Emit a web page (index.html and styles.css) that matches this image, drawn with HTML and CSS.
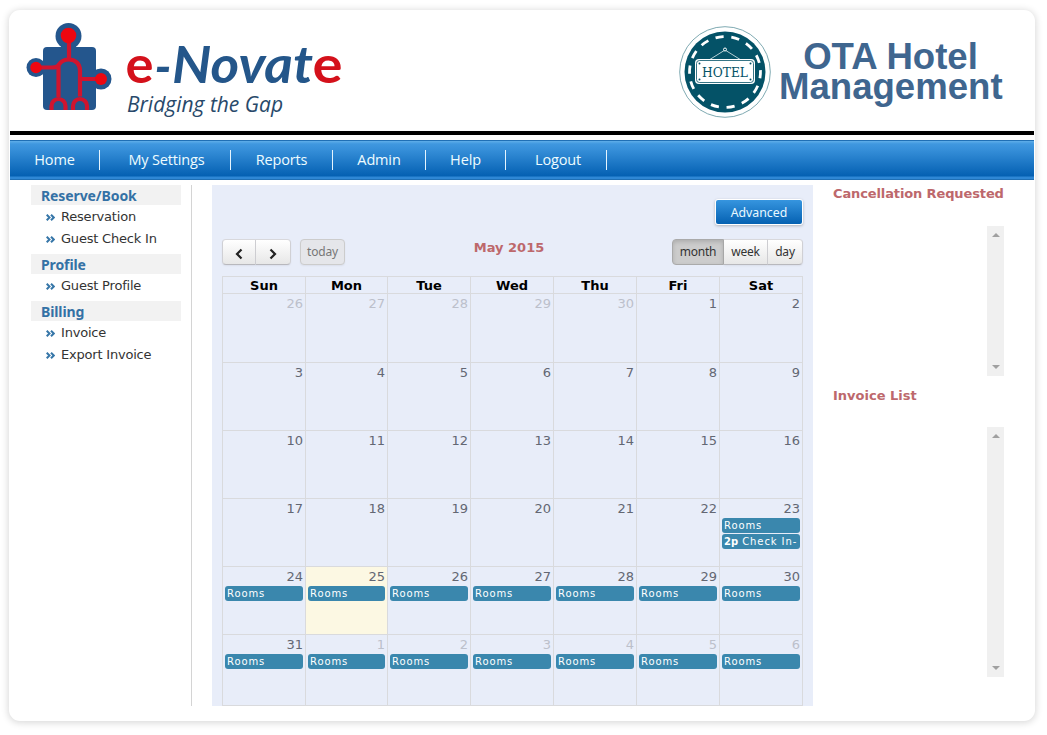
FILE: index.html
```html
<!DOCTYPE html>
<html lang="en">
<head>
<meta charset="utf-8">
<title>OTA Hotel Management</title>
<link rel="stylesheet" href="styles.css">
</head>
<body>
<div class="page">
  <header class="header">
    <svg class="logo" width="322" height="100" viewBox="24 19 322 100" role="img">
      <g fill="#24568d">
        <rect x="43" y="47" width="53" height="63" rx="4"/>
        <circle cx="68.500" cy="36" r="13"/><circle cx="36" cy="67.500" r="9.500"/><circle cx="101" cy="79" r="10.500"/>
        <path d="M61 43h15v8H61z"/>
      </g>
      <g fill="none" stroke="#d0142e" stroke-width="4.200">
        <path d="M69 38v21M36 67.500h16c3 0 6-1 7-3 2-3 6-5 10-5 7 0 11 5 11 11v26M58.500 66v31M80 79h20"/>
        <path d="M51.500 110v-4a7 7 0 0 1 14 0v4M73 110v-4a7 7 0 0 1 14 0v4"/>
      </g>
      <g fill="#ed0710"><circle cx="68.500" cy="35.500" r="7.800"/><circle cx="36" cy="67.500" r="5.700"/><circle cx="101" cy="79" r="6"/></g>
      <g class="brand">
        <text class="brand-red" x="125.500" y="83" textLength="28" lengthAdjust="spacingAndGlyphs">e</text>
        <text x="154.500" y="85" textLength="17" lengthAdjust="spacingAndGlyphs">-</text>
        <text x="172" y="83" textLength="141" lengthAdjust="spacingAndGlyphs">Novat</text>
        <text class="brand-red" x="312.500" y="83" textLength="30" lengthAdjust="spacingAndGlyphs">e</text>
      </g>
      <text class="tagline" x="127" y="112" textLength="156" lengthAdjust="spacingAndGlyphs">Bridging the Gap</text>
    </svg>
    <div class="product">
      <svg class="badge" width="92" height="92" viewBox="0 0 92 92">
        <circle cx="46" cy="46" r="45.300" fill="#fff" stroke="#7faab2"/>
        <circle cx="46" cy="46" r="40.500" fill="#045267"/>
        <circle cx="46" cy="46" r="35.500" fill="none" stroke="#fff" stroke-width="2.800" stroke-dasharray="8.200 7.731" transform="rotate(-3 46 46)"/>
        <path d="M30 34l16-10 16 10" fill="none" stroke="#b8d0d5" stroke-width="1"/>
        <circle cx="46" cy="23.500" r="1.500" fill="#045267" stroke="#fff"/>
        <rect x="16" y="33" width="60" height="25" rx="4" fill="#fff"/>
        <rect x="17.500" y="34.500" width="57" height="22" rx="3" fill="none" stroke="#045267" stroke-width=".8"/>
        <g fill="#045267"><circle cx="20.500" cy="37.500" r="1"/><circle cx="71.500" cy="37.500" r="1"/><circle cx="20.500" cy="53.500" r="1"/><circle cx="71.500" cy="53.500" r="1"/></g>
        <text class="badge-text" x="23" y="50.500" textLength="46" lengthAdjust="spacingAndGlyphs">HOTEL</text>
      </svg>
      <h1 class="title">OTA Hotel<br>Management</h1>
    </div>
  </header>

  <nav class="nav">
    <a class="nav-item home">Home</a>
    <a class="nav-item settings">My Settings</a>
    <a class="nav-item reports">Reports</a>
    <a class="nav-item admin">Admin</a>
    <a class="nav-item help">Help</a>
    <a class="nav-item logout">Logout</a>
  </nav>

  <div class="body">
    <aside class="sidebar" id="sidebar">
      <h2>Reserve/Book</h2>
      <ul><li>Reservation</li><li>Guest Check In</li></ul>
      <h2>Profile</h2>
      <ul><li>Guest Profile</li></ul>
      <h2>Billing</h2>
      <ul><li>Invoice</li><li>Export Invoice</li></ul>
    </aside>

    <main class="panel">
      <div class="actions"><button class="advanced">Advanced</button></div>
      <div class="toolbar">
        <div class="tools-left">
          <div class="group">
            <button class="btn arrow"><svg width="8" height="12" viewBox="0 0 8 12"><path d="M6.500 1.500L2 6l4.500 4.500"/></svg></button>
            <button class="btn arrow"><svg width="8" height="12" viewBox="0 0 8 12"><path d="M1.500 1.500L6 6l-4.500 4.500"/></svg></button>
          </div>
          <button class="btn today">today</button>
        </div>
        <h2 class="heading month-title">May 2015</h2>
        <div class="group views">
          <button class="btn month active">month</button>
          <button class="btn week">week</button>
          <button class="btn day">day</button>
        </div>
      </div>
      <div class="calendar" id="calendar"></div>
    </main>

    <aside class="lists">
      <h2 class="heading cancel-title">Cancellation Requested</h2>
      <div class="scroller short"><i class="up"></i><i class="down"></i></div>
      <h2 class="heading">Invoice List</h2>
      <div class="scroller tall"><i class="up"></i><i class="down"></i></div>
    </aside>
  </div>
</div>
<script src="calendar.js"></script>
</body>
</html>
```
FILE: calendar.js
```js
const calendar = document.getElementById('calendar');

function add(parent, className, text) {
  const el = document.createElement('div');
  el.className = className;
  if (text !== undefined) el.textContent = text;
  parent.appendChild(el);
  return el;
}

['Sun', 'Mon', 'Tue', 'Wed', 'Thu', 'Fri', 'Sat'].forEach(d => add(calendar, 'weekday', d));

const start = new Date(2015, 3, 26);
for (let i = 0; i < 42; i++) {
  const date = new Date(start.getFullYear(), start.getMonth(), start.getDate() + i);
  const inMonth = date.getMonth() === 4;
  const cell = add(calendar, 'cell' + (i === 29 ? ' is-today' : ''));
  add(cell, 'num' + (inMonth ? '' : ' other'), date.getDate());
  if (i >= 27) add(cell, 'event', 'Rooms');
  if (i === 27) {
    const ev = add(cell, 'event');
    const time = document.createElement('b');
    time.textContent = '2p';
    ev.append(time, ' Check In-');
  }
}

const chevrons = '<svg class="chevrons" width="9" height="7" viewBox="0 0 9 7"><path d="M.7.7L3.500 3.500.7 6.300M5 .7L7.800 3.500 5 6.300"/></svg>';
document.querySelectorAll('#sidebar li').forEach(li => li.insertAdjacentHTML('afterbegin', chevrons));
```
FILE: styles.css
```css
* { box-sizing: border-box; }
body { margin: 0; padding: 10px 0 0 9px; height: 735px; background: #fff; font-family: "DejaVu Sans", sans-serif; font-size: 13px; color: #333; }
h1, h2, ul { margin: 0; padding: 0; }
button { font: inherit; margin: 0; padding: 0; }

.page { width: 1026px; height: 711px; padding: 0 1px; border-radius: 11px; background: #fff; box-shadow: 0 1px 7px 1px rgba(0,0,0,.15); }

.header { height: 125px; padding: 9px 32px 0 14px; display: flex; justify-content: space-between; border-bottom: 4px solid #000; }
.brand { font: bold 51px Lato, sans-serif; font-style: italic; fill: #24568a; }
.brand-red { font-style: normal; fill: #d4111b; }
.tagline { font: italic 21px "Open Sans", sans-serif; fill: #28496a; }
.product { display: flex; gap: 8px; padding-top: 7px; }
.badge-text { font: 13px "DejaVu Serif", serif; fill: #045267; }
.title { width: 223px; padding-top: 16px; font: bold 36.600px/30px "Liberation Sans", sans-serif; color: #3f668f; text-align: center; white-space: nowrap; }

.nav { height: 40px; margin-top: 5px; display: flex; align-items: center; border: solid #1f6fb5; border-width: 1px 0; background: linear-gradient(#5faee9 0, #3f97df 3px, #3790da 8px, #0460b2 35px, #2e87d5 36px, #2e87d5 100%); }
.nav-item { height: 20px; border-right: 1px solid #e5f5ff; text-align: center; font: 14.500px/20px "Open Sans", sans-serif; letter-spacing: -.15px; color: #eefcff; }
.home { width: 90px; }
.settings { width: 131px; padding-left: 3px; }
.reports { width: 102px; }
.admin { width: 93px; }
.help { width: 80px; }
.logout { width: 101px; padding-left: 4px; }

.body { display: flex; height: 521px; margin-top: 5px; }
.sidebar { width: 182px; padding: 0 10px 0 21px; border-right: 1px solid #d4d4d4; }
.sidebar h2 { height: 20px; padding-left: 10px; background: #f2f2f2; font: bold 14px/21px "Noto Sans", sans-serif; letter-spacing: -.1px; color: #3471a5; }
.sidebar ul { list-style: none; padding: 1px 0 4px; }
.sidebar li { display: flex; align-items: center; gap: 6px; height: 22px; padding-left: 15px; font: 13px/22px "DejaVu Sans", sans-serif; letter-spacing: -.2px; color: #333; }
.chevrons path { fill: none; stroke: #3676a8; stroke-width: 2; }

.panel { width: 601px; margin-left: 20px; padding: 14px 10px 0; background: #e8edf9; }
.actions { height: 40px; display: flex; justify-content: flex-end; }
.advanced { width: 88px; height: 26px; border: 1px solid #fff; border-radius: 3px; background: linear-gradient(#3695df, #0561b2); box-shadow: 0 1px 3px rgba(0,0,0,.25); color: #e9f8ff; font: 12.300px "Noto Sans", sans-serif; }
.toolbar { height: 37px; display: grid; grid-template-columns: 1fr auto 1fr; align-items: start; }
.month-title { padding-right: 7px; }
.tools-left, .group { display: flex; }
.tools-left { gap: 9px; }
.views { justify-self: end; }
.btn { height: 26px; padding-bottom: 2px; border: 1px solid #ccc; border-color: #d8d8dc #d0d0d4 #b8b8bd; background: linear-gradient(#fff, #e7e7e7); font: 12px "Noto Sans", sans-serif; letter-spacing: -.2px; color: #333; box-shadow: 0 1px 2px rgba(0,0,0,.06); }
.btn + .btn { border-left: 0; }
.group .btn:first-child { border-radius: 4px 0 0 4px; }
.group .btn:last-child { border-radius: 0 4px 4px 0; }
.arrow { width: 35px; padding: 5px 0 0; line-height: 1; }
.arrow:first-child { width: 34px; }
.arrow path { fill: none; stroke: #222; stroke-width: 2.200; }
.btn.today { width: 45px; border-radius: 4px; border-color: #ccc; background: #e5e6ea; color: #777; }
.month { width: 52px; }
.week { width: 44px; }
.day { width: 35px; }
.active { background: #ccc; border-color: #aaa; box-shadow: inset 0 2px 4px rgba(0,0,0,.15); }
.heading { font: bold 13px/17px "DejaVu Sans", sans-serif; color: #bd686c; white-space: nowrap; }
.cancel-title { letter-spacing: -.12px; }

.calendar { display: grid; grid-template-columns: 83px 82px repeat(5, 83px); grid-template-rows: 17px 69px repeat(4, 68px) 71px; border: solid #d9dadd; border-width: 1px 0 0 1px; }
.weekday, .cell { border: solid #d9dadd; border-width: 0 1px 1px 0; }
.weekday { font: bold 13px/17px "DejaVu Sans", sans-serif; color: #000; text-align: center; }
.cell { padding: 1px 2px 0; overflow: hidden; }
.num { height: 18px; font-size: 13px; line-height: 18px; text-align: right; color: #636773; }
.other { color: #bcc0cb; }
.is-today { background: #fcf8e3; }
.event { height: 15px; margin-bottom: 1px; padding-left: 2px; border-radius: 3px; background: #3a87ad; color: #fff; font-size: 10px; line-height: 15px; letter-spacing: .9px; white-space: nowrap; overflow: hidden; }
.event b { letter-spacing: 0; }

.lists { margin-left: 20px; width: 171px; }
.scroller { width: 17px; margin-left: auto; display: flex; flex-direction: column; justify-content: space-between; align-items: center; padding: 7px 0; background: #f0f0f0; }
.short { height: 150px; margin: 24px 0 11px auto; }
.tall { height: 250px; margin-top: 23px; }
.up, .down { width: 0; height: 0; border: solid transparent; border-width: 0 4px; }
.up { border-bottom: 4px solid #a0a0a0; }
.down { border-top: 4px solid #a0a0a0; }
```
